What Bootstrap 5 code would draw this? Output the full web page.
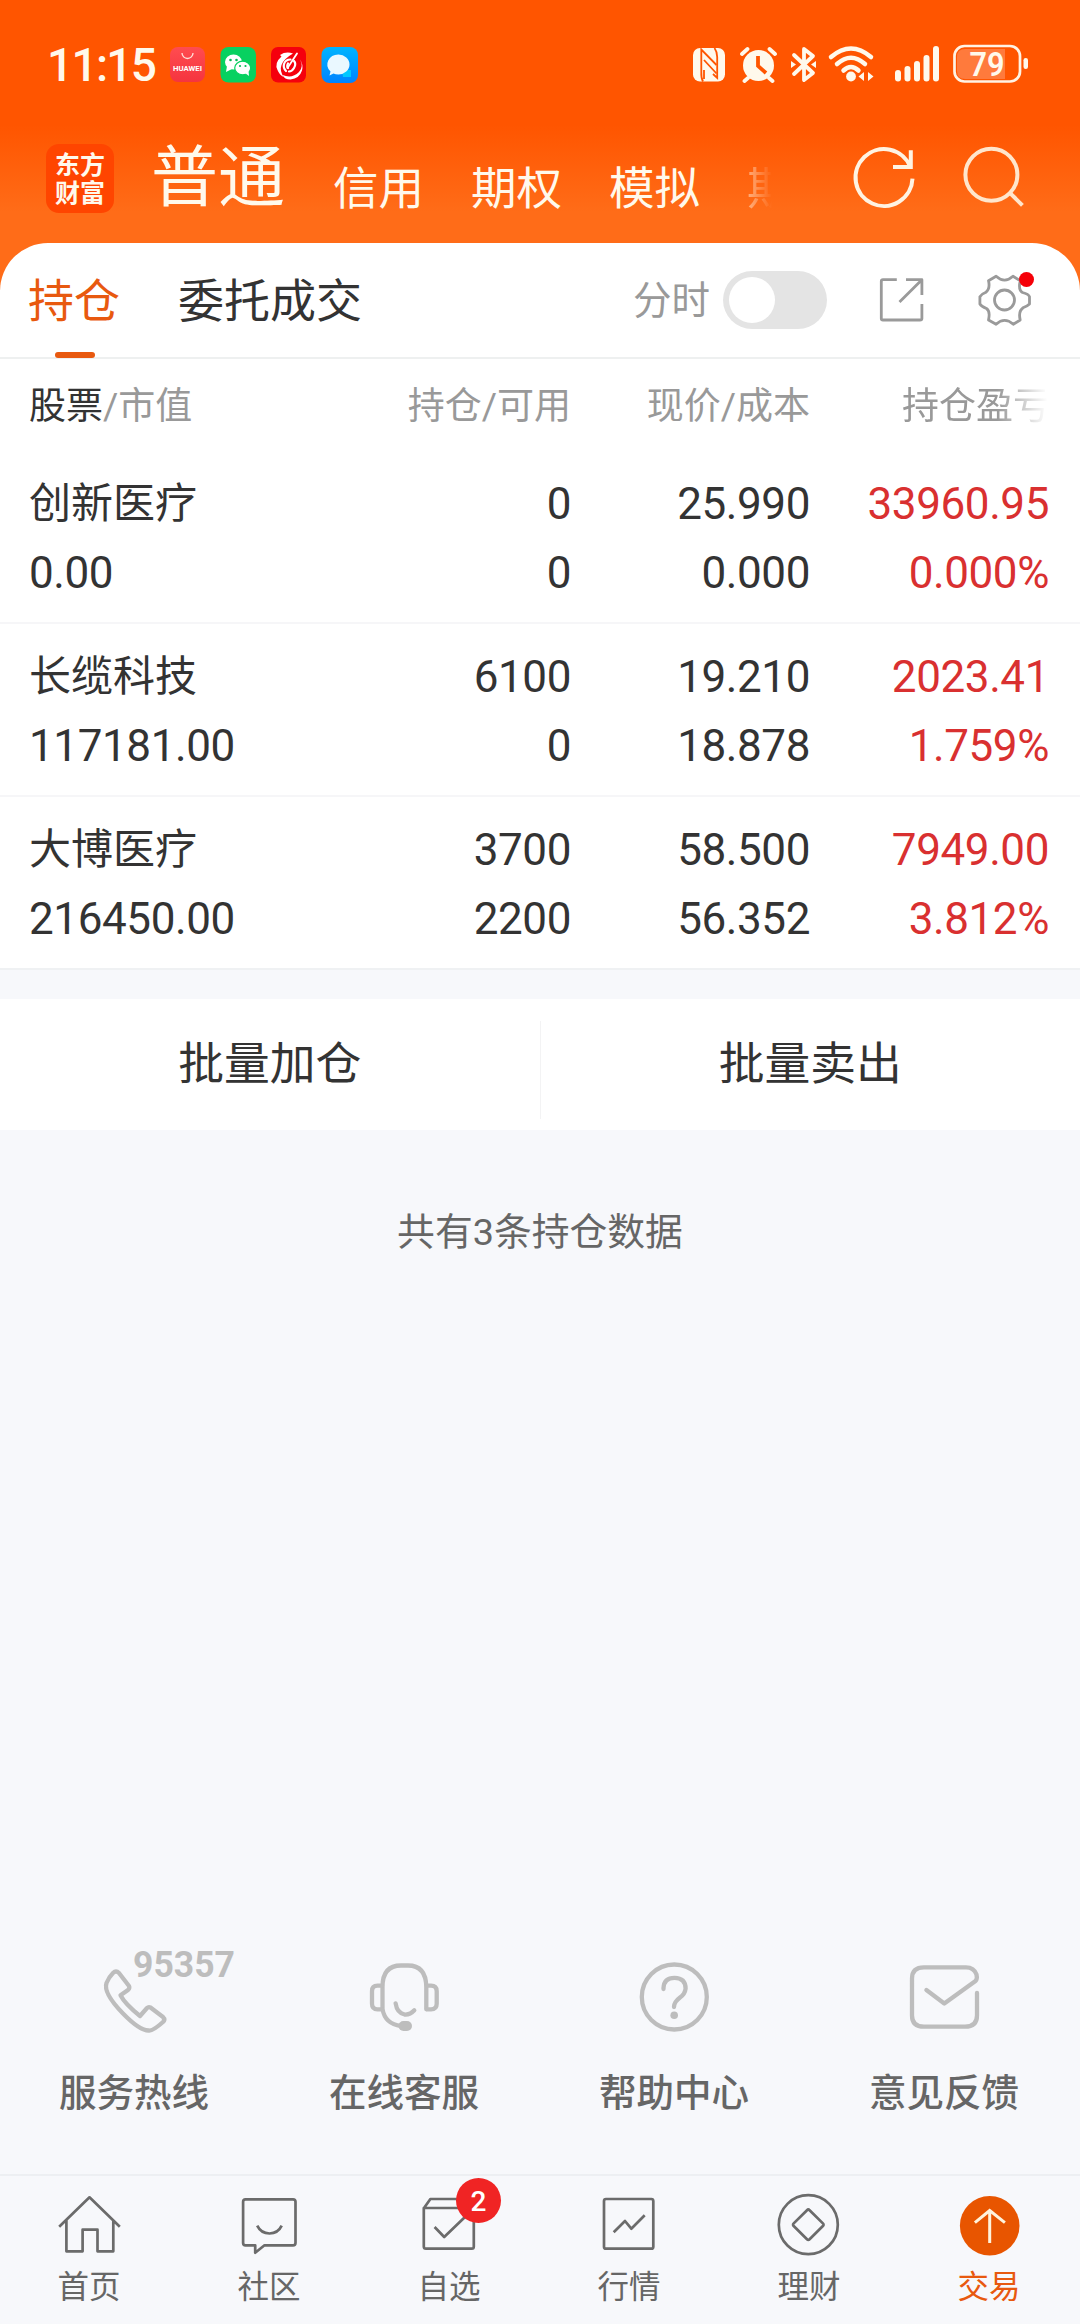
<!DOCTYPE html>
<html lang="zh-CN">
<head>
<meta charset="utf-8">
<meta name="viewport" content="width=device-width, initial-scale=1">
<title>交易 - 持仓</title>
<link rel="stylesheet" href="https://cdn.jsdelivr.net/npm/bootstrap@5.3.0/dist/css/bootstrap.min.css">
<style>
  body { width: 1080px; height: 2324px; overflow: hidden; background: #f7f8fb; color: #333; font-family: Roboto, "Noto Sans CJK SC", sans-serif; }
  svg { display: block; flex: none; overflow: visible; }
  .app-header { height: 290px; background: linear-gradient(#ff5500 0, #ff5500 125px, #ff6c18 212px, #ff6c18 290px); color: #fff9ec; }
  .status-bar { height: 128px; padding: 0 52px 0 47px; }
  .clock { font-size: 46px; line-height: 46px; width: 123px; letter-spacing: -1.7px; padding-top: 2px; font-weight: 500; }
  .channel-bar { height: 100px; padding-left: 46px; }
  .brand { width: 68px; height: 69px; border-radius: 13px; background: #ff4500; font: 700 25px/28px "Noto Sans CJK SC", sans-serif; margin-right: 37px; padding-bottom: 3px; }
  .channel { font-size: 45.5px; line-height: 60px; margin-right: 47px; padding-top: 23px; }
  .channel.current { font-size: 67px; line-height: 90px; padding-top: 0; margin-right: 48px; }
  .channel.fading { width: 25px; overflow: hidden; margin-right: 79px; -webkit-mask-image: linear-gradient(90deg, rgba(0,0,0,.5), transparent); mask-image: linear-gradient(90deg, rgba(0,0,0,.5), transparent); }
  .sheet { margin-top: -47px; background: #fff; border-radius: 48px 48px 0 0; }
  .tab-bar { height: 116px; border-bottom: 2px solid #eef0f0; padding: 0 45px 0 28px; }
  .tab-item { font-size: 46px; line-height: 117px; height: 114px; margin-right: 58px; }
  .tab-item.current { color: #e8590f; }
  .tab-item.current::after { content: ""; position: absolute; left: 27px; bottom: -1px; width: 40px; height: 6px; border-radius: 3px; background: #e8590f; }
  .gray { color: #999; }
  .switch-label { font-size: 38.5px; margin-right: 13px; padding-top: 2px; }
  .toggle { width: 104px; height: 58px; border-radius: 29px; background: #e4e4e4; padding: 6px; margin-right: 49px; }
  .toggle i { display: block; width: 46px; height: 46px; border-radius: 50%; background: #fff; }
  .dot { width: 15px; height: 15px; border-radius: 50%; background: #f50008; top: 2px; right: 1px; }
  .hold-row { padding: 0 30px 0 29px; }
  .hold-head { height: 92px; font-size: 37px; line-height: 95px; }
  .hold-head b { font-weight: 400; color: #333; }
  .hold-item { height: 173px; padding-top: 19px; font-size: 44px; line-height: 69px; border-bottom: 2px solid #f6f6f8; letter-spacing: -.4px; }
  .hold-item:last-child { border-color: #eff1f3; }
  .col-name { width: 301px; }
  .col-num { width: 240px; text-align: right; }
  .col-num.held { position: relative; left: 1px; }
  .col-num.up { position: relative; left: -1px; }
  .stock-name { font-size: 42px; letter-spacing: 0; line-height: 67px; margin-bottom: 2px; }
  .up { color: #d93030; }
  .fade-end { -webkit-mask-image: linear-gradient(90deg, #000 78%, transparent 99%); mask-image: linear-gradient(90deg, #000 78%, transparent 99%); }
  .batch { height: 131px; margin-top: 29px; font-size: 45.8px; line-height: 130px; background: #fff; }
  .batch-sep { width: 1px; height: 98px; background: #f3f3f4; margin-top: 10px; }
  .total { font-size: 37.8px; line-height: 56px; color: #666; margin-top: 74px; }
  .bottom-zone { color: #666; }
  .service { width: 270px; font-size: 37.5px; line-height: 56px; font-weight: 500; }
  .service svg { margin-bottom: 25px; }
  .service span, .nav-cell .cap { position: relative; left: -1px; }
  .app-nav { height: 150px; border-top: 2px solid #edeff2; margin-top: 53px; }
  .nav-cell { width: 180px; font-size: 31.5px; line-height: 43px; }
  .nav-cell svg { position: relative; top: -1px; }
  .nav-cell.current { color: #e8590f; }
  .count { left: 96px; top: 2px; width: 45px; height: 45px; border-radius: 50%; background: #f02424; color: #fff; font-size: 28px; line-height: 47px; font-weight: 500; }
  .line { fill: none; stroke: #6b6b6b; stroke-width: 2.7; stroke-linejoin: round; }
  .soft { fill: none; stroke: #bdbdbd; stroke-width: 4.3; stroke-linejoin: round; stroke-linecap: round; }
  .thin { fill: none; stroke: #9a9a9a; stroke-width: 2.8; stroke-linejoin: round; }
</style>
<script src="https://cdn.jsdelivr.net/npm/bootstrap@5.3.0/dist/js/bootstrap.bundle.min.js"></script>
</head>
<body class="d-flex flex-column">
<header class="app-header flex-shrink-0">
  <div class="status-bar d-flex align-items-center">
    <div class="clock">11:15</div>
    <svg width="188" height="37" viewBox="0 0 188 37">
      <defs>
        <linearGradient id="store" x2="0" y2="1"><stop stop-color="#ff4c50"/><stop offset="1" stop-color="#f5343f"/></linearGradient>
        <linearGradient id="chat" x2="0" y2="1"><stop stop-color="#00b4ff"/><stop offset="1" stop-color="#0083ff"/></linearGradient>
      </defs>
      <rect y="1" width="35" height="35" rx="8" fill="url(#store)"/>
      <path d="M12 7a5.5 5.5 0 0 0 11 0" fill="none" stroke="#ffe0d8" stroke-width="1.3"/>
      <text x="3" y="24.5" font-size="7" font-weight="700" textLength="29" lengthAdjust="spacingAndGlyphs" fill="#fff">HUAWEI</text>
      <rect x="50.500" y="1" width="35.500" height="35.500" rx="8" fill="#07d160"/>
      <ellipse cx="63.500" cy="16" rx="8.500" ry="7.500" fill="#fff"/><path d="M57 20l-1 6 6-3z" fill="#fff"/>
      <ellipse cx="72.700" cy="22" rx="8" ry="6.800" fill="#fff" stroke="#07d160" stroke-width="1.200"/><path d="M75 27l4 3-.5-5z" fill="#fff"/>
      <g fill="#07b957"><circle cx="60.500" cy="14" r="1.300"/><circle cx="66.500" cy="14" r="1.300"/><circle cx="70" cy="20" r="1.100"/><circle cx="75.500" cy="20" r="1.100"/></g>
      <rect x="101" y="1" width="35" height="35.500" rx="7" fill="#f5000d"/>
      <g fill="#fff">
        <path d="M123 7.500Q116 5 110 9l1.500 1.500Q104 17 107.500 24q2 5 6 7-4-7-2-12 2-6 11.500-11.500z"/>
        <path d="M130 13.500q4 7-1 12.500-7 7-16.500 3 2 4.500 8 4.500 9-1 11.500-9 1.500-6-2-11z"/>
      </g>
      <g fill="none" stroke="#fff" stroke-linecap="round"><path d="M127 7.500L117.500 22" stroke-width="1.800"/><path d="M120.500 13.500q-5 0-6.500 4.500-1 4 2 7M124 15q2.500 3 0 7-2 3.500-5 3.500M118 17.500q-1.500 3 0 4.500" stroke-width="2.200"/></g>
      <rect x="151.500" y="1" width="36.500" height="36" rx="8" fill="url(#chat)"/>
      <path d="M172 24h9v7h-8z" fill="#00c8ff"/>
      <path d="M168.500 8.500a11 10 0 0 1 0 20q-3 0-5-1l-4 2 1-4a11 10 0 0 1 8-17z" fill="#eaf8ff"/>
    </svg>
    <svg class="ms-auto" width="336" height="40" viewBox="692 44 336 40" fill="#fff9ec">
      <rect x="693" y="48" width="32" height="33.500" rx="7"/>
      <path d="M703 81.500Q701 78 701.300 72V49.500L716.500 65M704 60L716.500 73.500M704 70V79" fill="none" stroke="#ff5500" stroke-width="1.800"/>
      <path d="M714.500 48Q717.300 52 717.200 57V78L713 74" fill="none" stroke="#ff5500" stroke-width="1.800"/>
      <circle cx="758.500" cy="65.500" r="15.500"/>
      <path d="M742 54l5.500-5M775 54l-5.500-5M748 78l-3.500 3M769 78l3.500 3" stroke="#fff9ec" stroke-width="3.800" stroke-linecap="round"/>
      <path d="M758 56v10l8 7" fill="none" stroke="#ff5500" stroke-width="3.800"/>
      <path d="M794 55l19 18-9 7V49l9 7-19 18" fill="none" stroke="#fff9ec" stroke-width="3.800" stroke-linejoin="round" stroke-linecap="round"/>
      <path d="M791 61l5 3.500-5 3.500zM816 61l-5 3.500 5 3.500z"/>
      <g fill="none" stroke="#fff9ec" stroke-width="4.500" stroke-linecap="round">
        <path d="M831 57q20-17 40 0M837 64q14-12.500 28 0M843.500 70.500q7.500-7 15 0"/>
      </g>
      <circle cx="851" cy="76.500" r="4.900"/>
      <path d="M858.500 76.500l5.500-4.500v9zM873.500 76.500l-5.500-4.500v9z"/>
      <rect x="895" y="70" width="6" height="11.500" rx="3"/><rect x="904.500" y="66" width="6" height="15.500" rx="3"/><rect x="914" y="61" width="6" height="20.500" rx="3"/><rect x="923.500" y="55" width="6" height="26.500" rx="3"/><rect x="933" y="46" width="6" height="35.500" rx="3"/>
      <path d="M965 49h40v30h-40q-8 0-8-8V57q0-8 8-8z" fill="#ff7a3c"/>
      <rect x="954.500" y="46" width="65.500" height="35.500" rx="10" fill="none" stroke="#fff3e4" stroke-width="2.700"/>
      <rect x="1023.500" y="58" width="4.500" height="11" rx="2.200"/>
      <text x="987" y="75.500" text-anchor="middle" font-size="33" font-weight="600" textLength="35" lengthAdjust="spacingAndGlyphs">79</text>
    </svg>
  </div>
  <nav class="channel-bar d-flex align-items-center">
    <div class="brand d-flex flex-column justify-content-center text-center"><span>东方<br>财富</span></div>
    <span class="channel current">普通</span>
    <span class="channel">信用</span>
    <span class="channel">期权</span>
    <span class="channel">模拟</span>
    <span class="channel fading">期</span>
    <svg width="66" height="66" viewBox="0 0 66 66" fill="none" stroke="#fff3e2" stroke-width="4"><path d="M61.500 33.700A28.500 28.500 0 1 1 59.500 22"/><path d="M59.800 5.300V22H42"/></svg>
    <svg class="ms-5" width="66" height="66" viewBox="4 0 66 66" fill="none" stroke="#ffe6cc" stroke-width="4"><circle cx="30.400" cy="29.700" r="26"/><path d="M48.300 47.300l13.100 13"/></svg>
  </nav>
</header>

<section class="sheet flex-shrink-0">
  <div class="tab-bar d-flex align-items-center">
    <span class="tab-item current position-relative">持仓</span>
    <span class="tab-item">委托成交</span>
    <span class="switch-label gray ms-auto">分时</span>
    <div class="toggle"><i></i></div>
    <svg width="50" height="50" viewBox="0 0 50 50" class="thin"><path d="M20.800 4.700H7q-1.700 0-1.700 1.700v37q0 1.600 1.700 1.600h37q1.900 0 1.900-1.600V29M45.900 20V4.700H30M45.900 4.700L23.500 27"/></svg>
    <div class="position-relative ms-5">
      <svg width="61" height="60" viewBox="0 0 60 60" class="thin"><path d="M21.600 6.300Q30 14 38.500 6.300L45.700 10.700Q43.500 20 48 22.500 54 24 55 26.700V34Q53 36 49 37.500 43.500 41 45.700 50L38.800 54.300Q30 46.500 21.600 54.300L14 50Q16 41 12 38.500 7 36.500 5.400 34V26.700Q7 24 11 22.500 16 19 14 10.700Z"/><circle cx="30" cy="30" r="10"/></svg>
      <span class="dot position-absolute"></span>
    </div>
  </div>
  <div class="hold-row hold-head d-flex gray">
    <div class="col-name"><b>股票</b>/市值</div>
    <div class="col-num held">持仓/可用</div>
    <div class="col-num">现价/成本</div>
    <div class="col-num fade-end">持仓盈亏</div>
  </div>
  <div>
    <div class="hold-row hold-item d-flex">
      <div class="col-name"><div class="stock-name">创新医疗</div><div>0.00</div></div>
      <div class="col-num held"><div>0</div><div>0</div></div>
      <div class="col-num"><div>25.990</div><div>0.000</div></div>
      <div class="col-num up"><div>33960.95</div><div>0.000%</div></div>
    </div>
    <div class="hold-row hold-item d-flex">
      <div class="col-name"><div class="stock-name">长缆科技</div><div>117181.00</div></div>
      <div class="col-num held"><div>6100</div><div>0</div></div>
      <div class="col-num"><div>19.210</div><div>18.878</div></div>
      <div class="col-num up"><div>2023.41</div><div>1.759%</div></div>
    </div>
    <div class="hold-row hold-item d-flex">
      <div class="col-name"><div class="stock-name">大博医疗</div><div>216450.00</div></div>
      <div class="col-num held"><div>3700</div><div>2200</div></div>
      <div class="col-num"><div>58.500</div><div>56.352</div></div>
      <div class="col-num up"><div>7949.00</div><div>3.812%</div></div>
    </div>
  </div>
</section>

<div class="batch d-flex align-items-center text-center flex-shrink-0">
  <div class="flex-fill">批量加仓</div><div class="batch-sep"></div><div class="flex-fill">批量卖出</div>
</div>
<div class="total text-center">共有3条持仓数据</div>

<div class="bottom-zone mt-auto flex-shrink-0">
  <div class="d-flex text-center">
    <div class="service">
      <svg width="270" height="100" viewBox="0 0 270 100"><path class="soft" d="M113 33Q116 30 119 33L129 46Q130 48 128 50L120.500 55.300Q125 64 140 76L147 68Q148.500 66.500 150.500 67.500L163 77Q165.500 79.500 163 82Q153 91 149 90.500Q140 91 123 73.500Q103 53 106.500 43Q109 37 113 33Z"/><text x="133" y="36.500" font-family="Roboto, sans-serif" font-size="36" font-weight="700" textLength="102" lengthAdjust="spacingAndGlyphs" fill="#bdbdbd">95357</text></svg>
      <span>服务热线</span>
    </div>
    <div class="service">
      <svg width="270" height="100" viewBox="0 0 270 100"><g class="soft"><path d="M156.300 69.300V47Q156 25.500 138 25.500H131Q112.500 25.500 112.500 47V69Q115 84 131 86"/><path d="M112 45.700h-4.500q-5.500 0-5.500 5.500v12.600q0 5.500 5.500 5.500h4.500M157 45.700h4q5.700 0 5.700 5.500v12.600q0 5.500-5.700 5.500h-4"/><path d="M125.600 63.300Q127 73 134.500 74.500 140 75 144.300 70.300"/></g><rect x="128.500" y="81" width="13.500" height="10" rx="5" fill="#bdbdbd"/></svg>
      <span>在线客服</span>
    </div>
    <div class="service">
      <svg width="270" height="100" viewBox="0 0 270 100"><circle class="soft" cx="134.300" cy="57" r="32.500"/><path class="soft" stroke-linecap="butt" d="M123.500 49V48Q124 37.800 134.500 37.800 145.600 38 145.600 48.500 145 54 140 57.500 134 62 134 67"/><circle cx="134.200" cy="75.200" r="3.800" fill="#bdbdbd"/></svg>
      <span>帮助中心</span>
    </div>
    <div class="service">
      <svg width="270" height="100" viewBox="0 0 270 100"><path class="soft" d="M116.400 50L134.300 63.500 165.500 41Q167.500 39 166.500 34.500 164 27.300 156 27.300H114Q102 27.300 102 38.500V75.500Q102 86.700 114 86.700H155Q167 86.700 167 75.500V53"/></svg>
      <span>意见反馈</span>
    </div>
  </div>
  <nav class="app-nav d-flex text-center">
    <div class="nav-cell"><svg width="180" height="90" viewBox="0 0 180 90"><path class="line" d="M59.200 51.700L89.500 22.300 119.800 51.700M66.400 45V76.300H82.600V54.700H97.500V76.300H113.300V45"/></svg><span class="cap">首页</span></div>
    <div class="nav-cell"><svg width="180" height="90" viewBox="0 0 180 90"><path class="line" d="M65.500 24.300H113q2.500 0 2.500 2.500V68q0 2.300-2.500 2.300H84.500L75.200 77.700V70.300H65.500q-2.400 0-2.400-2.300V26.800q0-2.500 2.400-2.500zM77.200 50.700Q81 58.500 89.500 58.500 98 58.500 101.700 50.700"/></svg><span class="cap">社区</span></div>
    <div class="nav-cell position-relative"><svg width="180" height="90" viewBox="0 0 180 90"><path class="line" d="M64 33L70.400 24H108L113.800 33V71.500q0 2.200-2 2.200H66q-2.200 0-2.200-2.200V33H113.800M74.600 52L84.200 62 105 42"/></svg><span class="count position-absolute">2</span><span class="cap">自选</span></div>
    <div class="nav-cell"><svg width="180" height="90" viewBox="0 0 180 90"><rect class="line" x="64" y="24" width="49.300" height="49.700" rx="2"/><path class="line" d="M73.700 57.300L85 46 91.300 53.700 104.700 40.300"/></svg><span class="cap">行情</span></div>
    <div class="nav-cell"><svg width="180" height="90" viewBox="0 0 180 90"><circle class="line" cx="88.300" cy="49.700" r="29.500"/><path class="line" d="M87 35.200q1.300-1.300 2.600 0l13.300 13.200q1.300 1.300 0 2.600L89.600 64.200q-1.300 1.300-2.600 0L73.700 51q-1.300-1.300 0-2.600z"/></svg><span class="cap">理财</span></div>
    <div class="nav-cell current"><svg width="180" height="90" viewBox="0 0 180 90"><circle cx="89.700" cy="50.700" r="29.800" fill="#e85500"/><path d="M89.700 68V35.500M74.900 47.700L89.700 35.500 104.900 47.700" fill="none" stroke="#fff3dc" stroke-width="3"/></svg><span class="cap">交易</span></div>
  </nav>
</div>
</body>
</html>
